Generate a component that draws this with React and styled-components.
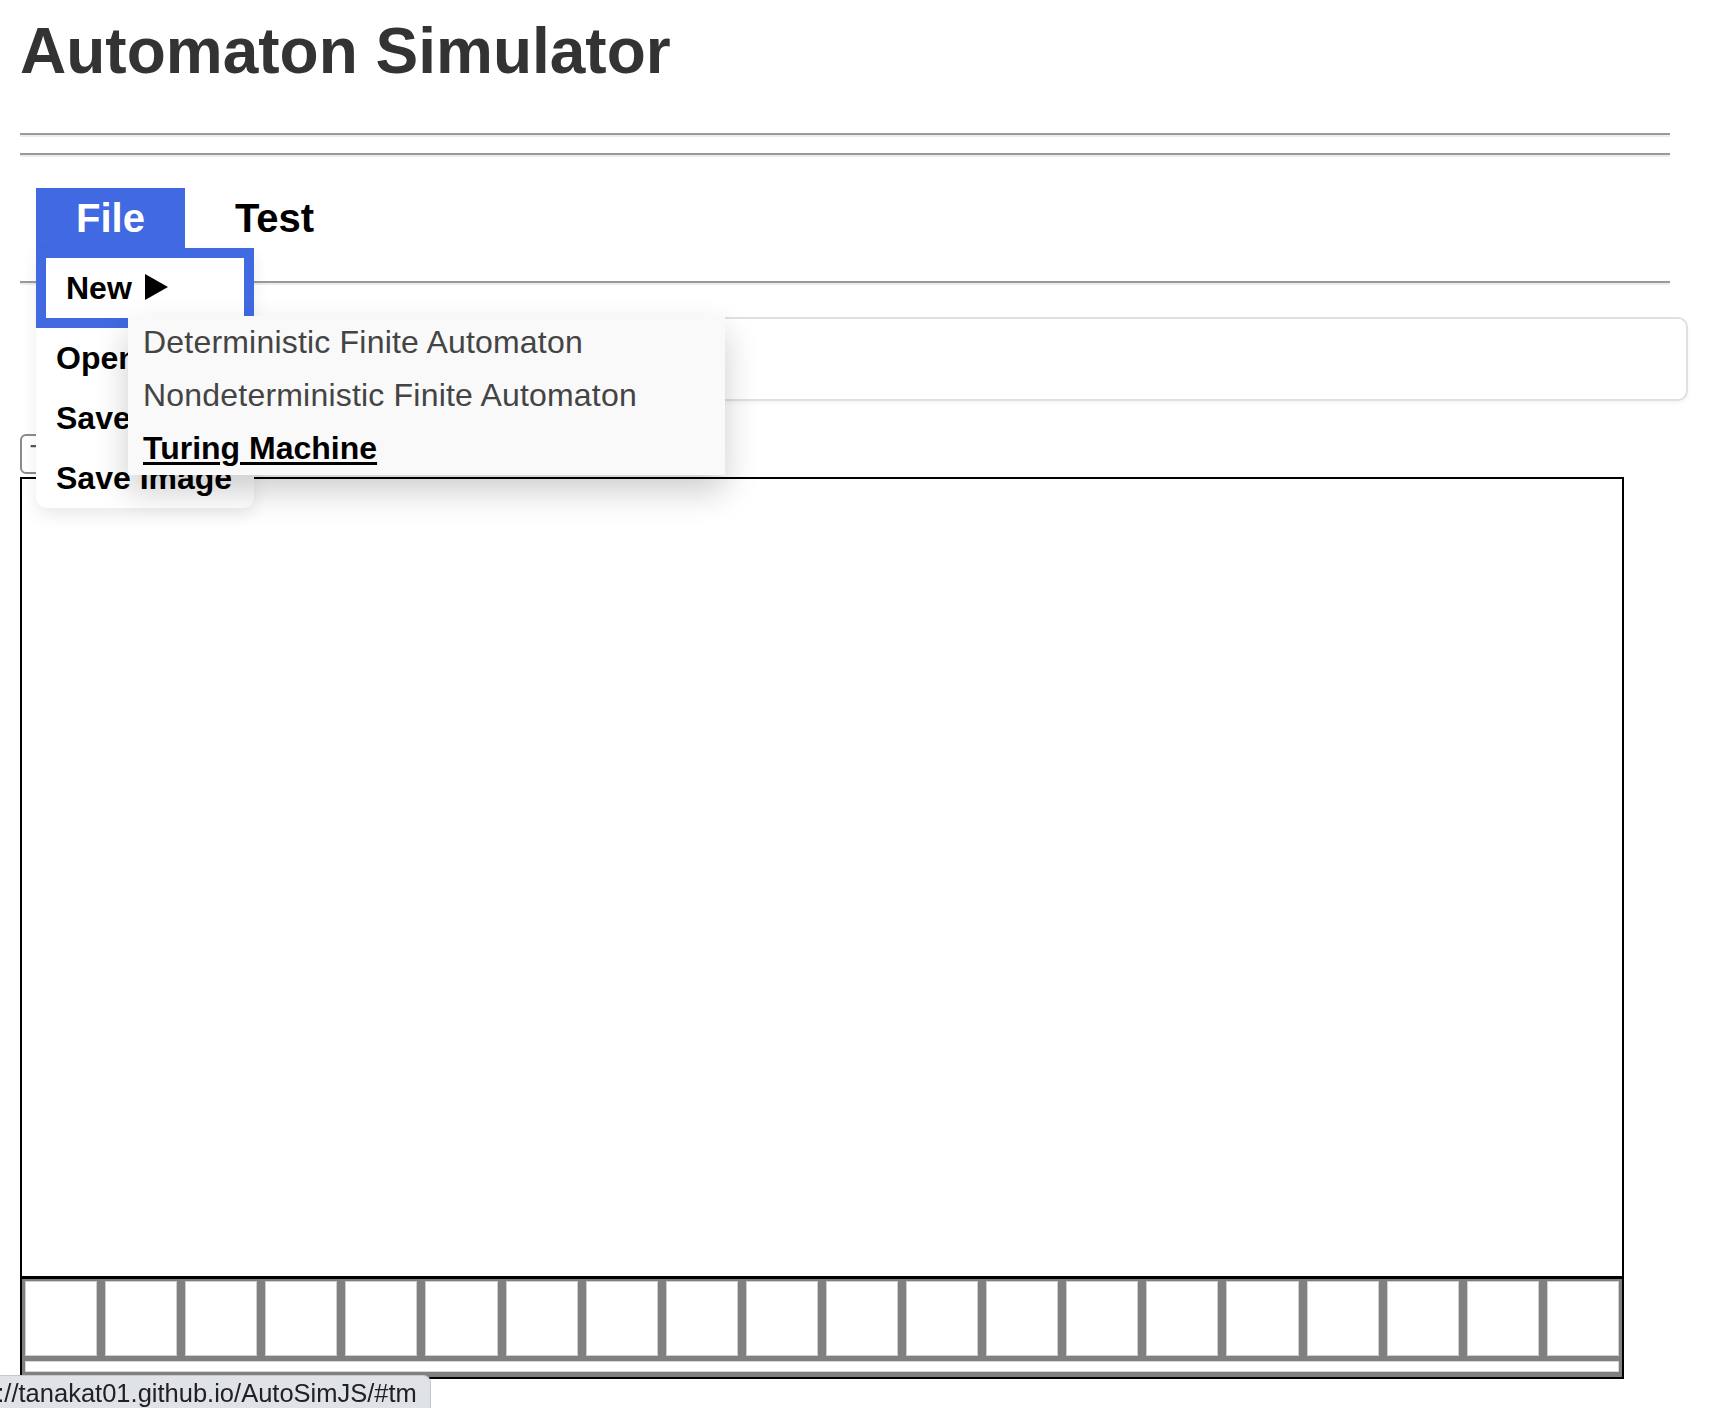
import { styled, createGlobalStyle } from "styled-components"

const GlobalStyle = createGlobalStyle`
    html, body {
        margin: 0;
        padding: 0;
        background: #fff;
    }

    body {
        font-family: "Liberation Sans", Arial, Helvetica, sans-serif;
        color: #000;
    }
`

const Page = styled.div`
    width: 1650px;
    padding: 14px 0 0 20px;
`

const Title = styled.h1`
    margin: 0;
    font-size: 64px;
    line-height: 74px;
    font-weight: 700;
    color: #333;
`

const Rule = styled.hr`
    margin: ${(p) => p.$top}px 0 0 0;
    height: 0;
    border: 0;
    border-top: 2px solid #9a9a9a;
    border-bottom: 2px solid #ededed;
`

const MenuBar = styled.nav`
    position: relative;
    display: flex;
    gap: 10px;
    height: 60px;
    margin: 31px 0 0 16px;
`

const Tab = styled.div`
    position: relative;
    padding: 0 40px;
    font-size: 40px;
    line-height: 60px;
    font-weight: 700;
    color: ${(p) => (p.$active ? "#fff" : "#000")};
    background: ${(p) => (p.$active ? "#4169e1" : "transparent")};
    z-index: 5;
`

const Dropdown = styled.ul`
    position: absolute;
    top: 60px;
    left: 0;
    width: 218px;
    margin: 0;
    padding: 0;
    list-style: none;
    background: #fff;
    border-radius: 0 0 10px 10px;
    box-shadow: 0 8px 16px rgba(0, 0, 0, 0.08);
    color: #000;
`

const DropItem = styled.li`
    position: relative;
    padding: 0 20px;
    font-size: 32px;
    line-height: 60px;
    font-weight: 700;
    white-space: nowrap;
    border: ${(p) => (p.$hover ? "10px solid #4169e1" : "0")};
`

const Arrow = styled.svg`
    width: 23px;
    height: 26px;
    margin-left: 13px;
    vertical-align: -1px;
`

const SubMenu = styled.div`
    position: absolute;
    top: 68px;
    left: 92px;
    width: 597px;
    background: #f9f9f9;
    box-shadow: 0 16px 32px rgba(0, 0, 0, 0.2);
    z-index: 20;
`

const SubItem = styled.a`
    display: block;
    padding: 8px 15px;
    font-size: 32px;
    line-height: 37px;
    letter-spacing: ${(p) => (p.$current ? "0" : "0.2px")};
    font-weight: ${(p) => (p.$current ? 700 : 400)};
    color: ${(p) => (p.$current ? "#000" : "#444")};
    text-decoration: ${(p) => (p.$current ? "underline" : "none")};
    text-underline-offset: 3px;
    text-decoration-thickness: 3px;
    white-space: nowrap;
`

const InfoBox = styled.div`
    margin: 32px 0 0 40px;
    width: 1608px;
    height: 64px;
    padding: 8px;
    border: 2px solid #e0e0e0;
    border-radius: 10px;
    box-shadow: 0 2px 4px rgba(0, 0, 0, 0.05);
`

const InputRow = styled.div`
    display: flex;
    margin-top: 33px;
    height: 40px;
`

const Field = styled.div`
    box-sizing: border-box;
    width: 380px;
    height: 40px;
    padding-left: 8px;
    border: 2px solid #8a8a8a;
    border-radius: 6px;
    font-size: 28px;
    line-height: 38px;
    color: #555;
`

const Canvas = styled.div`
    box-sizing: border-box;
    display: flex;
    flex-direction: column;
    width: 1604px;
    margin-top: 3px;
    border: 2px solid #000;
`

const Drawing = styled.div`
    height: 797px;
    background: #fff;
`

const Tape = styled.div`
    display: flex;
    flex-direction: column;
    gap: 5px;
    padding: 2px 3px 5px;
    background: #808080;
    border-top: 3px solid #000;
`

const Cells = styled.div`
    display: flex;
    gap: 8px;
`

const Cell = styled.div`
    box-sizing: border-box;
    flex: 1;
    height: 75px;
    background: #fff;
    border: 1px solid #cfcfcf;
`

const Track = styled.div`
    box-sizing: border-box;
    height: 11px;
    background: #fff;
    border: 1px solid #d6d6d6;
`

const StatusBar = styled.div`
    position: fixed;
    left: 0;
    bottom: 0;
    box-sizing: border-box;
    width: 431px;
    height: 33px;
    overflow: hidden;
    background: #dfe2e7;
    border-top: 1px solid #c4c7cc;
    border-right: 1px solid #c4c7cc;
    border-top-right-radius: 8px;
    font-size: 25.5px;
    line-height: 34px;
    color: #202124;
    white-space: nowrap;
`

const StatusText = styled.span`
    display: inline-block;
    margin-left: -58px;
`

const subItems = [
    { label: "Deterministic Finite Automaton" },
    { label: "Nondeterministic Finite Automaton" },
    { label: "Turing Machine", current: true },
]

export default function App() {
    return (
        <>
            <GlobalStyle />
            <Page>
                <Title>Automaton Simulator</Title>
                <Rule $top={45} />
                <Rule $top={16} />

                <MenuBar>
                    <Tab $active>
                        File
                        <Dropdown>
                            <DropItem $hover>
                                New
                                <Arrow viewBox="0 0 23 26">
                                    <path d="M0 0 L23 13 L0 26 Z" fill="#000" />
                                </Arrow>
                            </DropItem>
                            <DropItem>Open</DropItem>
                            <DropItem>Save</DropItem>
                            <DropItem>Save Image</DropItem>
                            <SubMenu>
                                {subItems.map((item) => (
                                    <SubItem
                                        key={item.label}
                                        href="#tm"
                                        $current={item.current}>
                                        {item.label}
                                    </SubItem>
                                ))}
                            </SubMenu>
                        </Dropdown>
                    </Tab>
                    <Tab>Test</Tab>
                </MenuBar>

                <Rule $top={33} />
                <InfoBox />

                <InputRow>
                    <Field>Test</Field>
                </InputRow>

                <Canvas>
                    <Drawing />
                    <Tape>
                        <Cells>
                            {Array.from({ length: 20 }, (_, i) => (
                                <Cell key={i} />
                            ))}
                        </Cells>
                        <Track />
                    </Tape>
                </Canvas>
            </Page>

            <StatusBar>
                <StatusText>https://tanakat01.github.io/AutoSimJS/#tm</StatusText>
            </StatusBar>
        </>
    )
}
